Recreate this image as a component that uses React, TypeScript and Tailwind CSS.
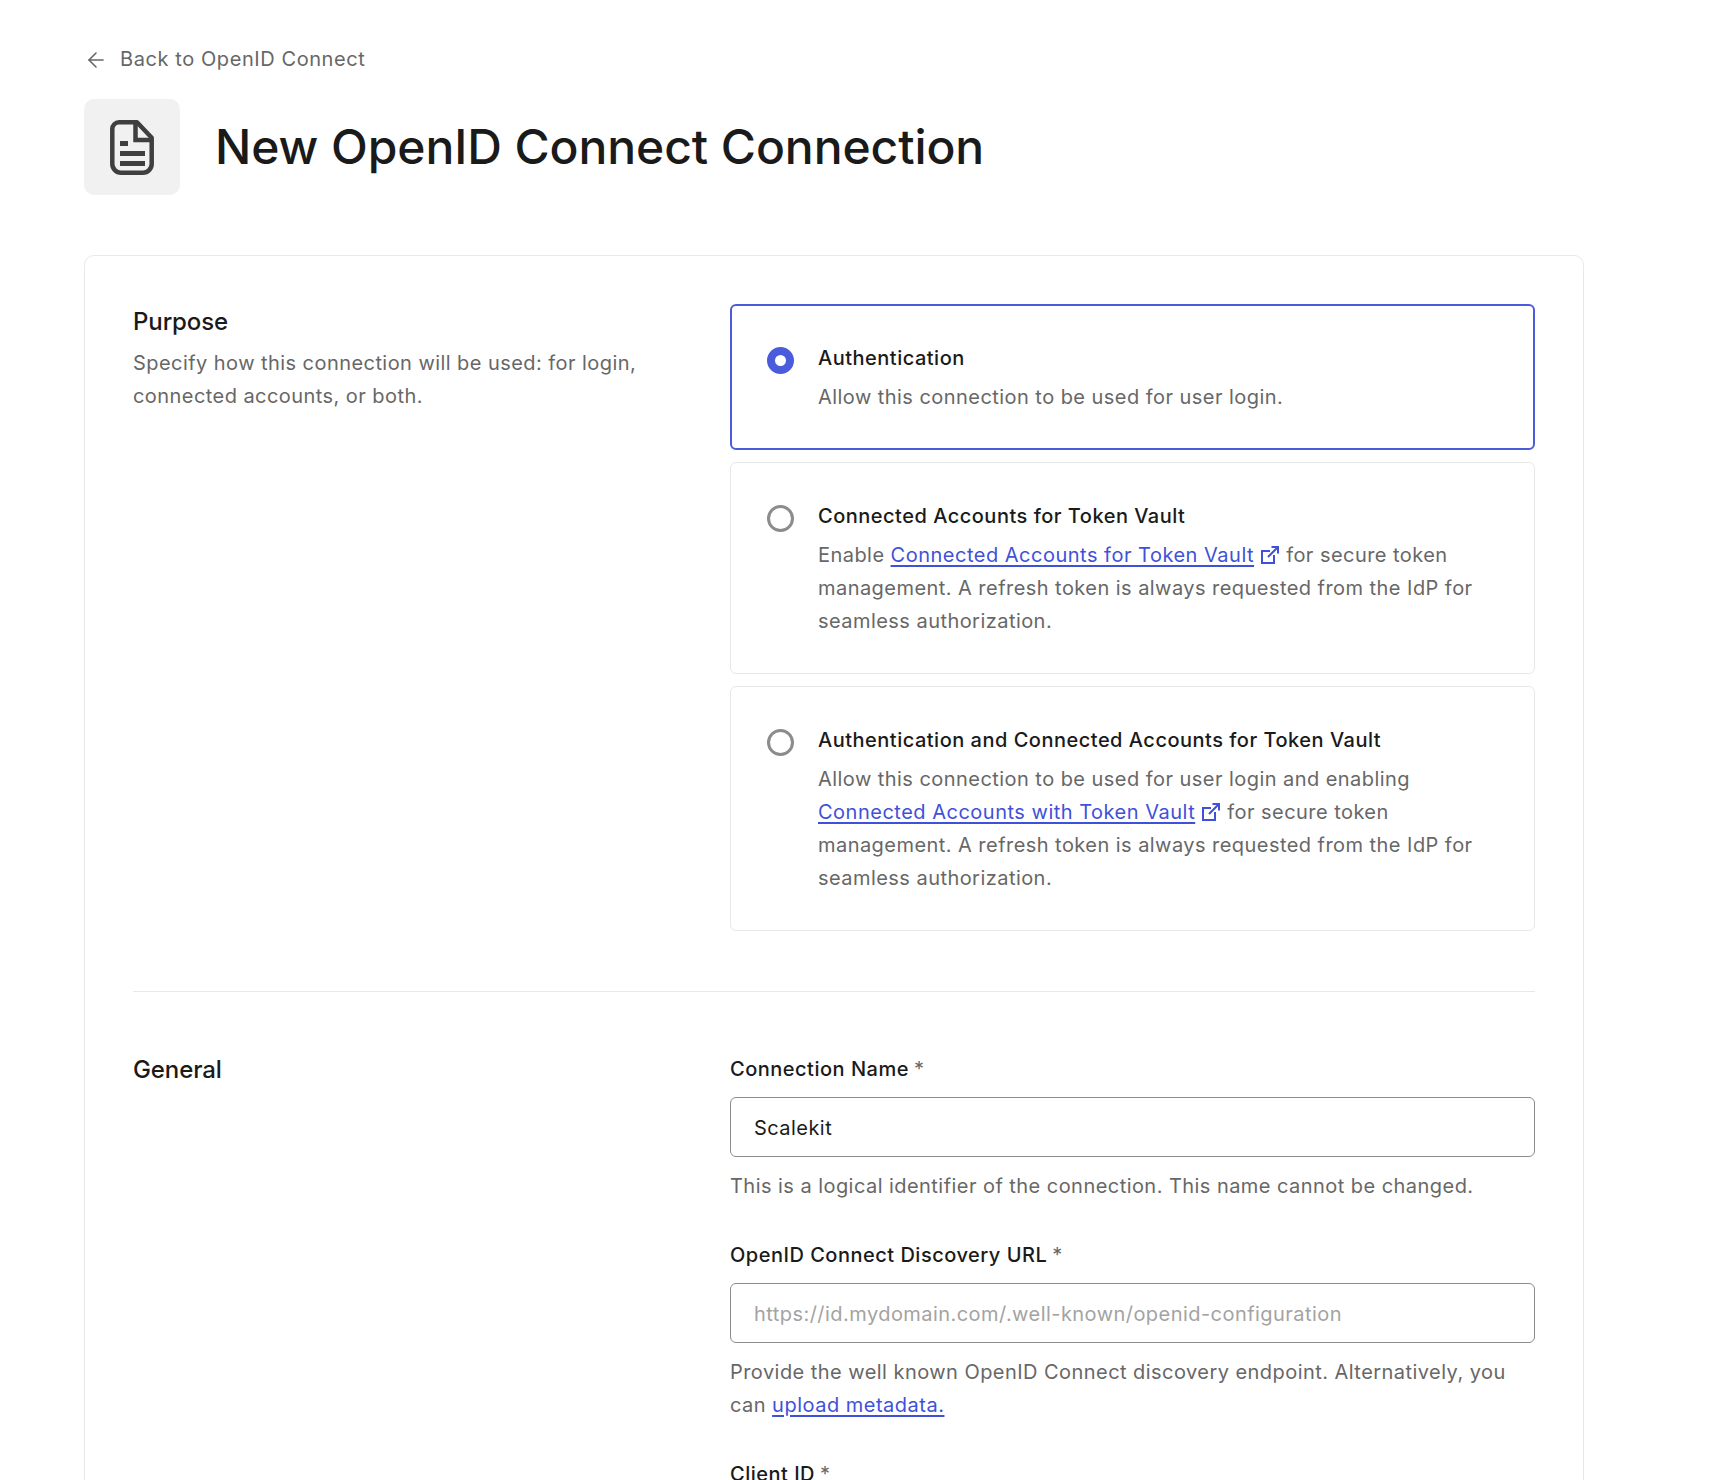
import { ArrowLeft } from 'lucide-react'

function ExternalIcon() {
  return (
    <svg viewBox="0 0 18 18" fill="none" stroke="currentColor" strokeWidth="2" className="inline-block w-[18px] h-[18px] ml-[7px] mr-[1px] align-[-2px]">
      <path d="M9 5H1v12h12V9" />
      <path d="M10.500 1H17V7.500M17 1 7 11" />
    </svg>
  )
}

function DocIcon() {
  return (
    <svg viewBox="0 0 44 55" fill="none" className="w-[44px] h-[55px]" stroke="#3f3f3f" strokeWidth="4.500">
      <path d="M9 2.300h18l14.700 15.500V44a8.700 8.700 0 0 1-8.700 8.700H11A8.700 8.700 0 0 1 2.300 44V9A6.700 6.700 0 0 1 9 2.300Z" strokeLinejoin="round" />
      <path d="M25.500 2.300V20h16.200" />
      <path d="M10 23.500h8M10 33.500h25M10 43.500h25" strokeWidth="5" />
    </svg>
  )
}

function Radio({ checked }: { checked?: boolean }) {
  if (checked) {
    return <span className="block shrink-0 w-[27px] h-[27px] mt-[5px] rounded-full border-[8px] border-[#4a5bdc] bg-white" />
  }
  return <span className="block shrink-0 w-[27px] h-[27px] mt-[5px] rounded-full border-[3px] border-[#8c8c8c] bg-white" />
}

function Link({ children }: { children: React.ReactNode }) {
  return <a className="text-[#3f51d9] tracking-[0.5px] underline underline-offset-[3px]">{children}</a>
}

function Option({ checked, title, children }: { checked?: boolean; title: string; children: React.ReactNode }) {
  return (
    <div className={checked ? 'flex gap-[24px] rounded-[6px] border-2 border-[#4a5bdc] pl-[35px] pr-[48px] pt-[36px] pb-[34px]' : 'flex gap-[24px] rounded-[6px] border border-[#e8e8e8] pl-[36px] pr-[48px] pt-[37px] pb-[35px]'}>
      <Radio checked={checked} />
      <div>
        <div className="text-[20px] leading-[33px] tracking-[0.5px] font-medium text-[#1a1a1a]">{title}</div>
        <div className="mt-[6px] text-[20px] leading-[33px] tracking-[0.45px] text-[#676767]">{children}</div>
      </div>
    </div>
  )
}

function Field({ label, value, placeholder, children }: { label: string; value?: string; placeholder?: string; children?: React.ReactNode }) {
  return (
    <div>
      <div className="pt-[1px] text-[20px] leading-[33px] tracking-[0.5px] font-medium text-[#1a1a1a]">
        {label}<span className="ml-[5px] text-[#676767] font-normal">*</span>
      </div>
      <div className={`mt-[11px] h-[60px] flex items-center rounded-[6px] border border-[#8c8c8c] px-[23px] text-[20px] tracking-[0.45px] ${value ? 'text-[#1a1a1a]' : 'text-[#a3a3a3]'}`}>
        <span className="pt-[1px]">{value || placeholder}</span>
      </div>
      {children && <div className="mt-[13px] text-[20px] leading-[33px] tracking-[0.45px] text-[#676767]">{children}</div>}
    </div>
  )
}

export default function App() {
  return (
    <div className="h-[1480px] overflow-hidden bg-white font-['Inter',sans-serif] px-[84px] pt-[43px]">
      <div className="flex items-center gap-[12px] text-[20px] leading-[33px] tracking-[0.58px] text-[#676767]">
        <ArrowLeft className="w-[24px] h-[24px]" strokeWidth={1.6} />
        Back to OpenID Connect
      </div>

      <div className="mt-[23px] flex items-center gap-[35px]">
        <div className="w-[96px] h-[96px] rounded-[10px] bg-[#f1f1f1] flex items-center justify-center">
          <DocIcon />
        </div>
        <h1 className="text-[48px] font-medium tracking-[-0.08px] text-[#1a1a1a]">New OpenID Connect Connection</h1>
      </div>

      <div className="mt-[60px] w-[1500px] rounded-[10px] border border-[#e8e8e8] px-[48px] pt-[48px]">
        <div className="flex">
          <div className="w-[597px] shrink-0 pr-[60px]">
            <div className="text-[24px] leading-[36px] font-medium tracking-[-0.1px] text-[#1a1a1a]">Purpose</div>
            <p className="mt-[7px] text-[20px] leading-[33px] tracking-[0.44px] text-[#676767]">
              Specify how this connection will be used: for login, connected accounts, or both.
            </p>
          </div>
          <div className="flex-1 flex flex-col gap-[12px]">
            <Option checked title="Authentication">Allow this connection to be used for user login.</Option>
            <Option title="Connected Accounts for Token Vault">
              Enable <Link>Connected Accounts for Token Vault</Link><span className="text-[#3f51d9]"><ExternalIcon /></span> for secure token management. A refresh token is always requested from the IdP for seamless authorization.
            </Option>
            <Option title="Authentication and Connected Accounts for Token Vault">
              Allow this connection to be used for user login and enabling <Link>Connected Accounts with Token Vault</Link><span className="text-[#3f51d9]"><ExternalIcon /></span> for secure token management. A refresh token is always requested from the IdP for seamless authorization.
            </Option>
          </div>
        </div>

        <div className="mt-[60px] mb-[60px] h-px bg-[#e8e8e8]" />

        <div className="flex">
          <div className="w-[597px] shrink-0 text-[24px] leading-[36px] font-medium tracking-[-0.1px] text-[#1a1a1a]">General</div>
          <div className="flex-1 flex flex-col gap-[35px]">
            <Field label="Connection Name" value="Scalekit">
              This is a logical identifier of the connection. This name cannot be changed.
            </Field>
            <Field label="OpenID Connect Discovery URL" placeholder="https://id.mydomain.com/.well-known/openid-configuration">
              Provide the well known OpenID Connect discovery endpoint. Alternatively, you can <Link>upload metadata.</Link>
            </Field>
            <Field label="Client ID" value=" " />
          </div>
        </div>
      </div>
    </div>
  )
}
